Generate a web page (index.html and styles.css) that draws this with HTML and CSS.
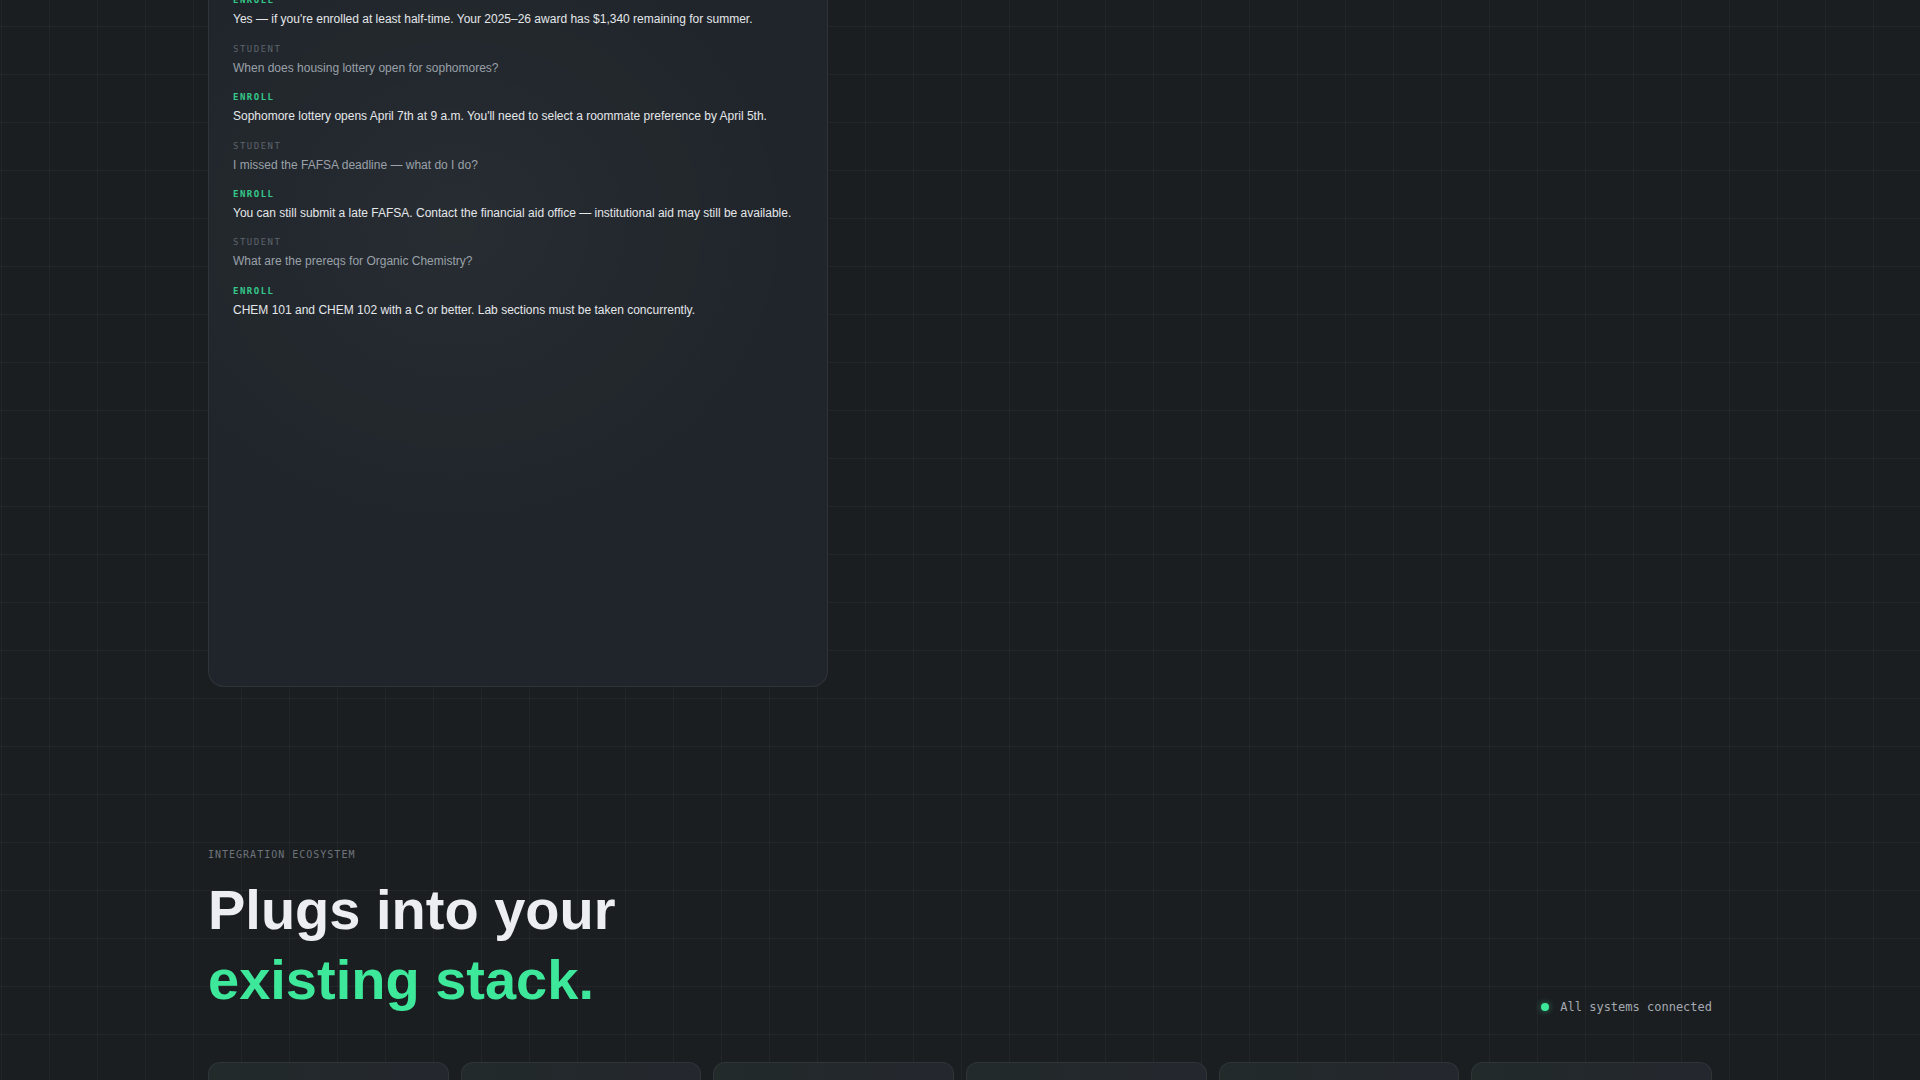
FILE: index.html
```html
<!DOCTYPE html>
<html lang="en">
<head>
  <meta charset="UTF-8" />
  <meta name="viewport" content="width=device-width, initial-scale=1.0" />
  <title>Enroll — Integrations</title>
  <link rel="stylesheet" href="styles.css">
</head>
<body>
  <main class="page">
    <section class="demo">
      <div class="chat">
        <div class="msg student">
          <span class="who">Student</span>
          <p>Can I use my Pell Grant for summer classes?</p>
        </div>
        <div class="msg bot">
          <span class="who">Enroll</span>
          <p>Yes — if you're enrolled at least half-time. Your 2025–26 award has $1,340 remaining for summer.</p>
        </div>
        <div class="msg student">
          <span class="who">Student</span>
          <p>When does housing lottery open for sophomores?</p>
        </div>
        <div class="msg bot">
          <span class="who">Enroll</span>
          <p>Sophomore lottery opens April 7th at 9 a.m. You'll need to select a roommate preference by April 5th.</p>
        </div>
        <div class="msg student">
          <span class="who">Student</span>
          <p>I missed the FAFSA deadline — what do I do?</p>
        </div>
        <div class="msg bot">
          <span class="who">Enroll</span>
          <p>You can still submit a late FAFSA. Contact the financial aid office — institutional aid may still be available.</p>
        </div>
        <div class="msg student">
          <span class="who">Student</span>
          <p>What are the prereqs for Organic Chemistry?</p>
        </div>
        <div class="msg bot">
          <span class="who">Enroll</span>
          <p>CHEM 101 and CHEM 102 with a C or better. Lab sections must be taken concurrently.</p>
        </div>
      </div>
    </section>

    <section class="ecosystem">
      <div class="eco-head">
        <div>
          <p class="eyebrow">Integration Ecosystem</p>
          <h2>Plugs into your<br><span class="accent">existing stack.</span></h2>
        </div>
        <div class="status"><span class="dot"></span>All systems connected</div>
      </div>

      <div class="integrations">
        <div class="card">Canvas</div>
        <div class="card">Banner</div>
        <div class="card">Workday</div>
        <div class="card">Slack</div>
        <div class="card">Salesforce</div>
        <div class="card">Ellucian</div>
      </div>
    </section>
  </main>
</body>
</html>
```

FILE: styles.css
```css
body {
  margin: 0;
  font-family: "Liberation Sans", Arial, sans-serif;
  color: #eceef1;
  background-color: #1b1e21;
  background-image:
    linear-gradient(to right, rgba(255, 255, 255, 0.035) 1px, transparent 1px),
    linear-gradient(to bottom, rgba(255, 255, 255, 0.035) 1px, transparent 1px);
  background-size: 48px 48px;
  background-position: 1px 26px;
  overflow: hidden;
}
.page {
  width: 1504px;
  margin: -79px auto 0;
}

/* chat demo */
.chat {
  width: 620px;
  height: 766px;
  box-sizing: border-box;
  padding: 24px;
  display: flex;
  flex-direction: column;
  gap: 14.4px;
  border: 1px solid rgba(255, 255, 255, 0.07);
  border-radius: 16px;
  background-color: #20252b;
  background-image: radial-gradient(ellipse 55% 40% at 40% 40%, rgba(255, 255, 255, 0.035), transparent);
}
.msg .who {
  display: block;
  font-family: "DejaVu Sans Mono", monospace;
  font-size: 9px;
  line-height: 12px;
  letter-spacing: 1.5px;
  text-transform: uppercase;
  margin-bottom: 5px;
}
.msg p {
  margin: 0;
  font-size: 12px;
  line-height: 17px;
}
.student .who {
  color: #5d646c;
}
.student p {
  color: #9aa1a9;
}
.bot .who {
  color: #34c98a;
  font-weight: bold;
}
.bot p {
  color: #e4e7ea;
}

/* integrations */
.ecosystem {
  padding-top: 161px;
}
.eco-head {
  display: flex;
  justify-content: space-between;
  align-items: flex-end;
  margin-bottom: 47px;
}
.eyebrow {
  margin: 0 0 13px;
  font-family: "DejaVu Sans Mono", monospace;
  font-size: 10px;
  line-height: 14px;
  letter-spacing: 1px;
  text-transform: uppercase;
  color: #6e747b;
}
h2 {
  margin: 0;
  font-size: 56px;
  line-height: 70px;
  font-weight: bold;
  color: #eceef1;
}
.accent {
  color: #3ee89b;
}
.status {
  display: flex;
  align-items: center;
  gap: 11px;
  padding-bottom: 2px;
  font-family: "DejaVu Sans Mono", monospace;
  font-size: 12px;
  line-height: 1;
  color: #a3a9b0;
}
.dot {
  width: 8px;
  height: 8px;
  border-radius: 50%;
  background-color: #3ee89b;
  box-shadow: 0 0 6px rgba(62, 232, 155, 0.5);
}
.integrations {
  display: grid;
  grid-template-columns: repeat(6, 1fr);
  gap: 12px;
}
.card {
  height: 120px;
  padding: 24px;
  border: 1px solid rgba(255, 255, 255, 0.06);
  border-radius: 12px;
  background-image: linear-gradient(90deg, #222a2a, #24272e);
  color: #cfd3d8;
  font-size: 14px;
}
```
